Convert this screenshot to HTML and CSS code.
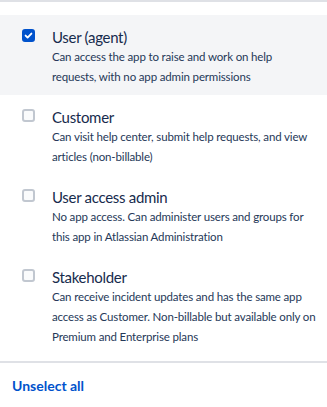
FILE: index.html
```html
<!DOCTYPE html>
<html lang="en">
<head>
    <meta charset="UTF-8">
    <meta name="viewport" content="width=device-width, initial-scale=1.0">
    <title>Roles</title>
    <link rel="stylesheet" href="styles.css">
</head>
<body>

    <div class="role-menu">
        <div class="role-list">
            <label class="role-option selected">
                <input type="checkbox" checked>
                <span class="role-text">
                    <span class="role-name">User (agent)</span>
                    <span class="role-desc">Can access the app to raise and work on help requests, with no app admin permissions</span>
                </span>
            </label>

            <label class="role-option">
                <input type="checkbox">
                <span class="role-text">
                    <span class="role-name">Customer</span>
                    <span class="role-desc">Can visit help center, submit help requests, and view articles (non-billable)</span>
                </span>
            </label>

            <label class="role-option">
                <input type="checkbox">
                <span class="role-text">
                    <span class="role-name">User access admin</span>
                    <span class="role-desc">No app access. Can administer users and groups for this&nbsp;app in Atlassian Administration</span>
                </span>
            </label>

            <label class="role-option">
                <input type="checkbox">
                <span class="role-text">
                    <span class="role-name">Stakeholder</span>
                    <span class="role-desc">Can receive incident updates and has the same app access as Customer. Non-billable but available only on Premium and Enterprise plans</span>
                </span>
            </label>
        </div>

        <div class="role-footer">
            <button type="button" class="unselect-all">Unselect all</button>
        </div>
    </div>

</body>
</html>
```

FILE: styles.css
```css
body {
    margin: 0;
    padding: 0;
    background-color: #fff;
    font-family: Lato, "Open Sans", sans-serif;
    color: #172b4d;
}
.role-menu {
    width: 327px;
    height: 407px;
    border-top: 2px solid #dfe1e6;
    border-radius: 0 0 4px 4px;
    box-sizing: border-box;
    background-color: #fff;
}
.role-list {
    padding: 13px 0 6px;
    border-bottom: 2px solid #dfe1e6;
}
.role-option {
    display: flex;
    align-items: flex-start;
    gap: 17px;
    padding: 12px 8px 8px 22px;
    cursor: pointer;
}
.role-option.selected {
    background-color: #f4f5f7;
}
.role-option input[type="checkbox"] {
    appearance: none;
    flex: none;
    width: 13px;
    height: 13px;
    margin: 2px 0 0;
    border: 2px solid #c1c7d0;
    border-radius: 3px;
    background-color: #fafbfc;
    box-sizing: border-box;
}
.role-option input[type="checkbox"]:checked {
    border-color: #0052cc;
    background-color: #0052cc;
    background-image: url("data:image/svg+xml,%3Csvg xmlns='http://www.w3.org/2000/svg' viewBox='0 0 9 9'%3E%3Cpath d='M1.6 4.6l2 2 3.8-4' fill='none' stroke='%23fff' stroke-width='1.9' stroke-linecap='round' stroke-linejoin='round'/%3E%3C/svg%3E");
    background-size: 9px 9px;
    background-position: center;
    background-repeat: no-repeat;
}
.role-text {
    display: flex;
    flex-direction: column;
}
.role-name {
    font-size: 15px;
    line-height: 20px;
    letter-spacing: -0.3px;
    color: #172b4d;
}
.role-desc {
    font-size: 11.5px;
    line-height: 20px;
    letter-spacing: -0.15px;
    color: #253858;
}
.role-footer {
    padding: 12px 12px;
}
.unselect-all {
    padding: 0;
    border: none;
    background: none;
    font-family: inherit;
    font-size: 14px;
    font-weight: bold;
    line-height: 20px;
    color: #0052cc;
    cursor: pointer;
}
```
